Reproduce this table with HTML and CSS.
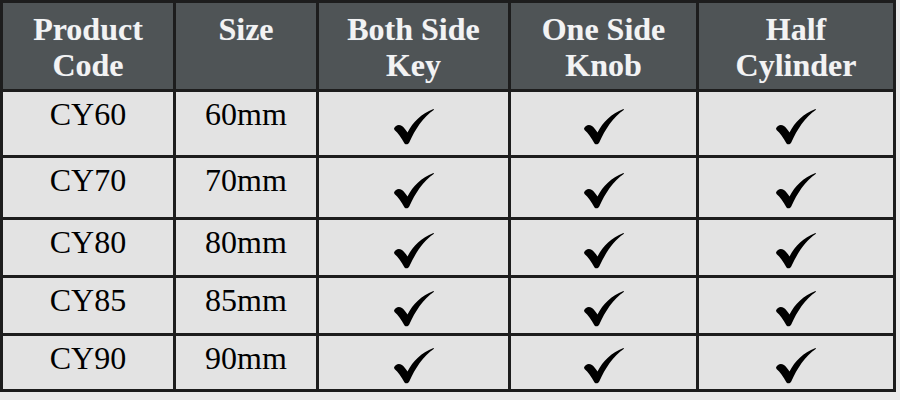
FILE: index.html
```html
<!DOCTYPE html>
<html>
<head>
<meta charset="utf-8">
<link rel="stylesheet" href="styles.css">
</head>
<body>
<svg width="0" height="0" class="defs">
  <defs>
    <path id="chk" d="M0 19.5 C1.5 16 5 15 8 17 C10 18.5 12 21 13.5 23.5 C19 13 27 5 39.5 0 L40 0.8 C29 8 21 21 15.5 33 C14.5 35.5 12 36 10.5 34.5 C7.5 29 4 24 0.5 21 Z"/>
  </defs>
</svg>
<table class="spec">
  <colgroup>
    <col class="c1"><col class="c2"><col class="c3"><col class="c4"><col class="c5">
  </colgroup>
  <thead>
    <tr class="head">
      <th>Product<br>Code</th>
      <th>Size</th>
      <th>Both Side<br>Key</th>
      <th>One Side<br>Knob</th>
      <th>Half<br>Cylinder</th>
    </tr>
  </thead>
  <tbody>
    <tr class="r1">
      <td class="txt">CY60</td><td class="txt">60mm</td>
      <td class="mk"><svg class="check" viewBox="0 0 40 36"><use href="#chk"/></svg></td>
      <td class="mk"><svg class="check" viewBox="0 0 40 36"><use href="#chk"/></svg></td>
      <td class="mk"><svg class="check" viewBox="0 0 40 36"><use href="#chk"/></svg></td>
    </tr>
    <tr class="r2">
      <td class="txt">CY70</td><td class="txt">70mm</td>
      <td class="mk"><svg class="check" viewBox="0 0 40 36"><use href="#chk"/></svg></td>
      <td class="mk"><svg class="check" viewBox="0 0 40 36"><use href="#chk"/></svg></td>
      <td class="mk"><svg class="check" viewBox="0 0 40 36"><use href="#chk"/></svg></td>
    </tr>
    <tr class="r3">
      <td class="txt">CY80</td><td class="txt">80mm</td>
      <td class="mk"><svg class="check" viewBox="0 0 40 36"><use href="#chk"/></svg></td>
      <td class="mk"><svg class="check" viewBox="0 0 40 36"><use href="#chk"/></svg></td>
      <td class="mk"><svg class="check" viewBox="0 0 40 36"><use href="#chk"/></svg></td>
    </tr>
    <tr class="r4">
      <td class="txt">CY85</td><td class="txt">85mm</td>
      <td class="mk"><svg class="check" viewBox="0 0 40 36"><use href="#chk"/></svg></td>
      <td class="mk"><svg class="check" viewBox="0 0 40 36"><use href="#chk"/></svg></td>
      <td class="mk"><svg class="check" viewBox="0 0 40 36"><use href="#chk"/></svg></td>
    </tr>
    <tr class="r5">
      <td class="txt">CY90</td><td class="txt">90mm</td>
      <td class="mk"><svg class="check" viewBox="0 0 40 36"><use href="#chk"/></svg></td>
      <td class="mk"><svg class="check" viewBox="0 0 40 36"><use href="#chk"/></svg></td>
      <td class="mk"><svg class="check" viewBox="0 0 40 36"><use href="#chk"/></svg></td>
    </tr>
  </tbody>
</table>
</body>
</html>
```

FILE: styles.css
```css
html, body {
  margin: 0;
  padding: 0;
  background: #ebebeb;
}
body {
  font-family: "Liberation Serif", "Times New Roman", serif;
}
.defs {
  position: absolute;
  width: 0;
  height: 0;
}
.spec {
  border-collapse: collapse;
  table-layout: fixed;
  width: 893px;
  margin: 0;
}
.c1 { width: 173px; }
.c2 { width: 143px; }
.c3 { width: 192px; }
.c4 { width: 188px; }
.c5 { width: 197px; }
.spec th, .spec td {
  border: 3px solid #1d1d1d;
  text-align: center;
  padding: 0;
}
.spec th {
  background: #4f5456;
  color: #f3f3f3;
  font-weight: bold;
  font-size: 32px;
  line-height: 36px;
  vertical-align: top;
  padding-top: 8px;
  text-shadow: 0 0 1px rgba(150, 170, 200, 0.5);
}
.head { height: 89px; }
.spec td {
  background: #e3e3e3;
  color: #000;
  font-size: 32px;
  line-height: 32px;
}
.spec td.txt {
  vertical-align: top;
  padding-top: 6px;
}
.spec td.mk {
  vertical-align: middle;
  padding-top: 6px;
}
.check {
  display: block;
  width: 40px;
  height: 36px;
  margin: 0 auto;
  fill: #000;
}
.r1 { height: 66px; }
.r2 { height: 62px; }
.r3 { height: 58px; }
.r4 { height: 58px; }
.r5 { height: 56px; }
```
